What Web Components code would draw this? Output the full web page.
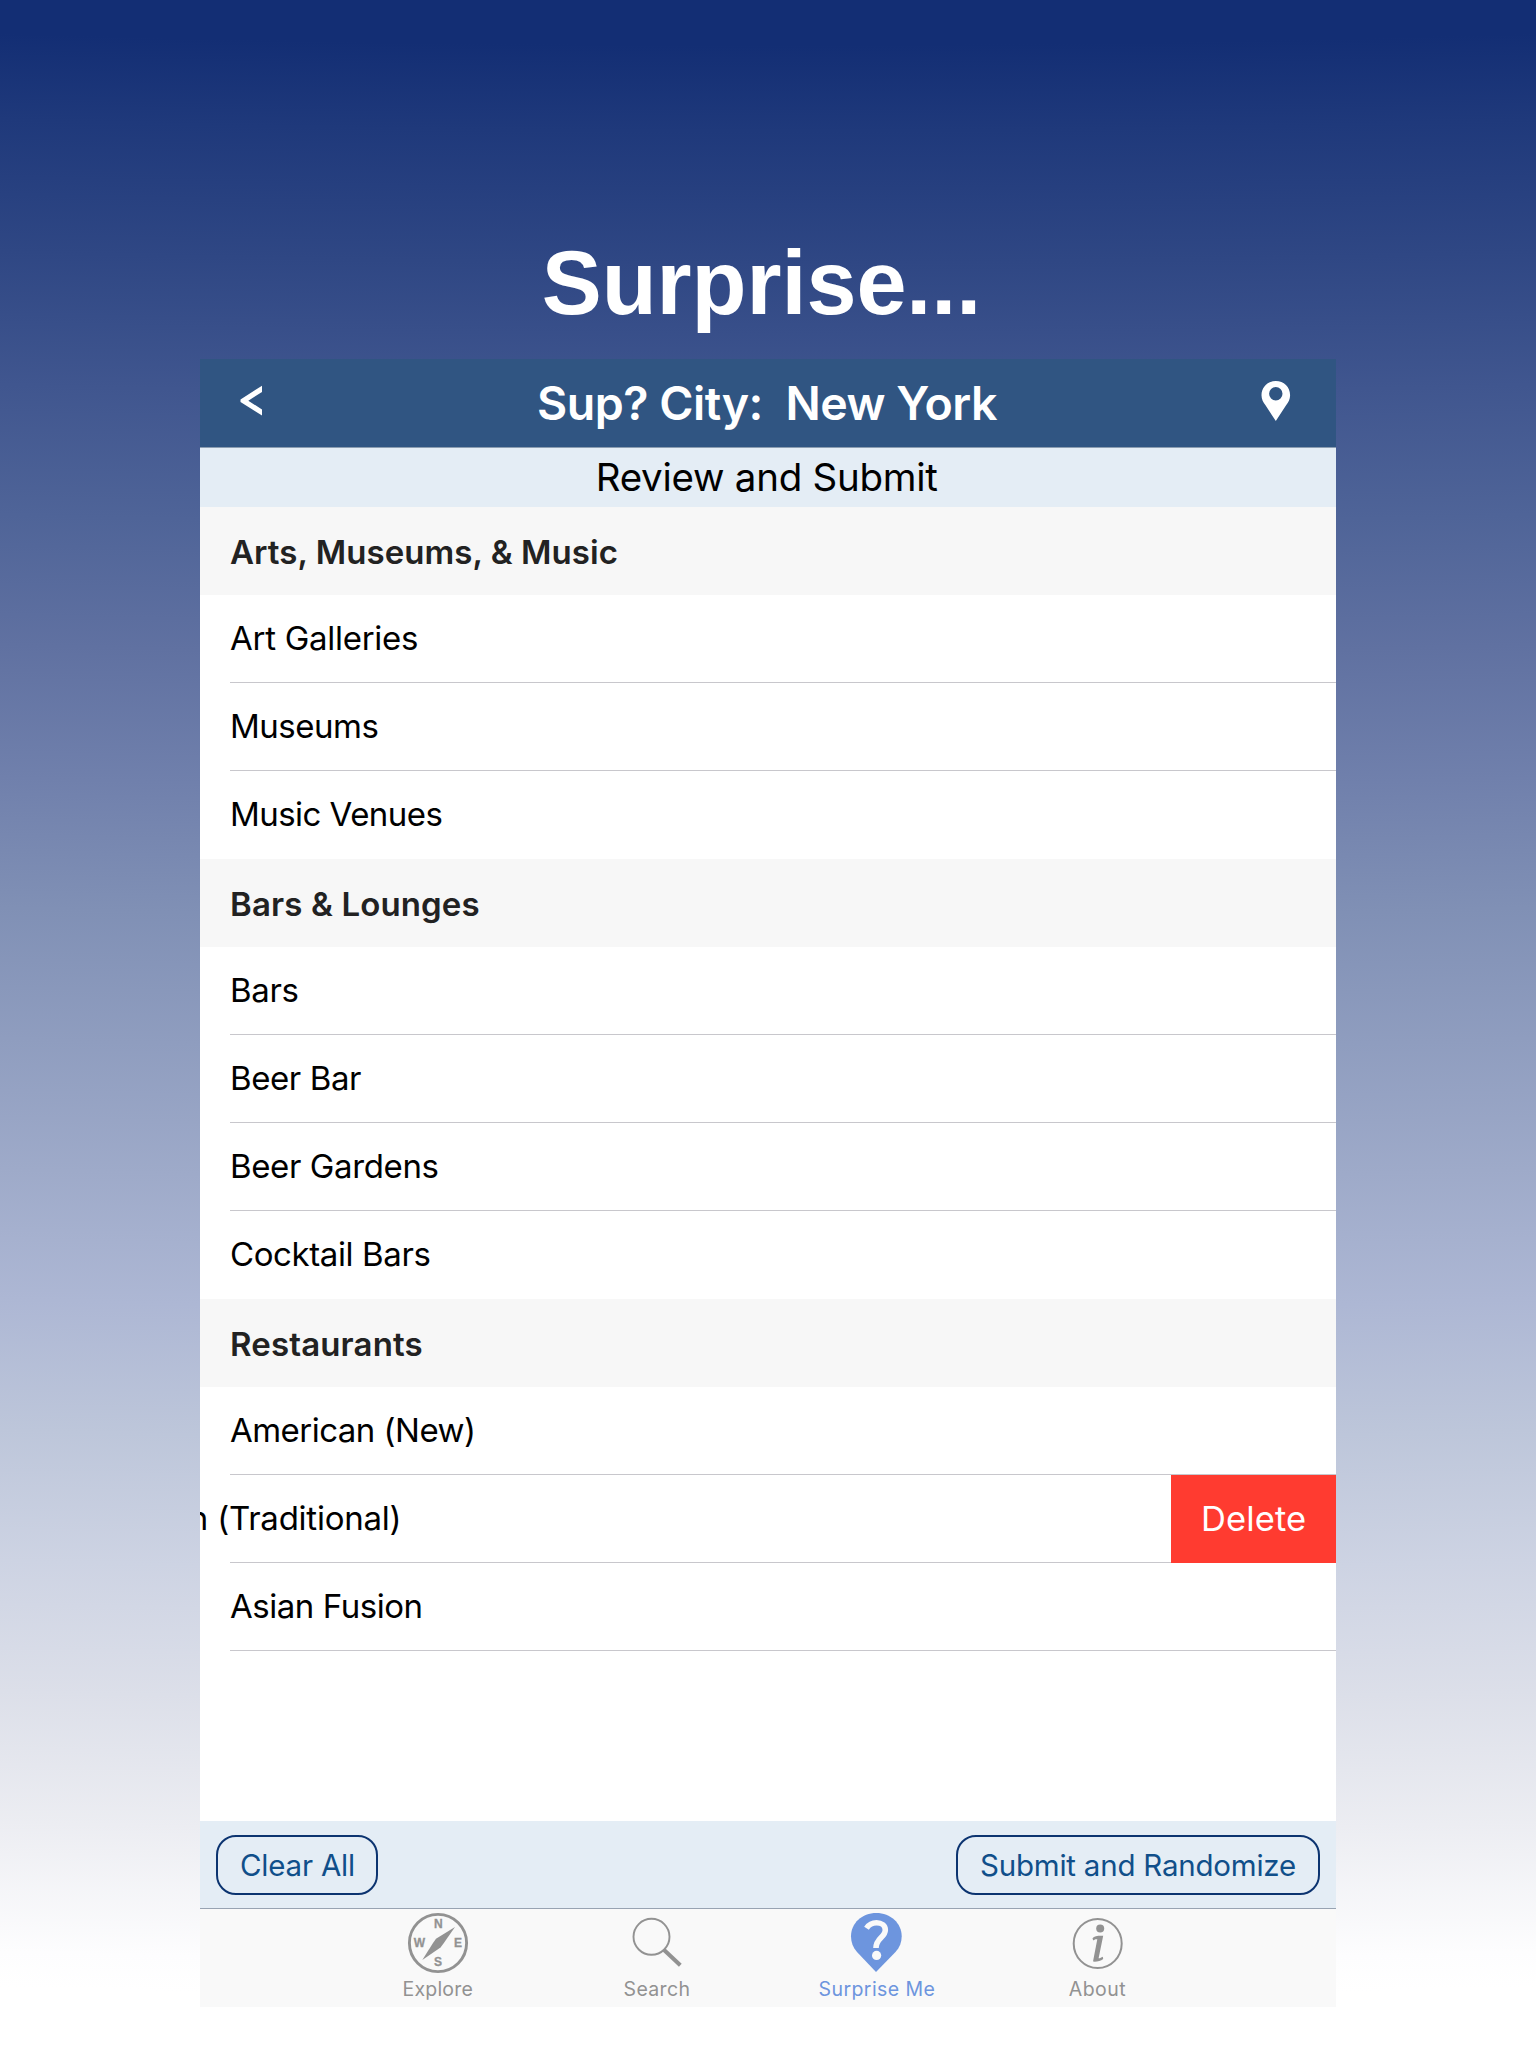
<!DOCTYPE html>
<html lang="en">
<head>
<meta charset="utf-8">
<title>Sup? City</title>
<style>
html,body{margin:0;padding:0}
body{width:1536px;height:2048px;overflow:hidden;background:#fff;font-family:Inter,"Liberation Sans",sans-serif}
</style>
</head>
<body>
<promo-page>
  <fit-text slot="title" w="431.5">Surprise...</fit-text>
  <nav-header><fit-text w="459">Sup? City:  New York</fit-text></nav-header>
  <sub-header><fit-text w="338.5">Review and Submit</fit-text></sub-header>
  <list-section>
    <fit-text slot="head" w="388" dx="-1">Arts, Museums, &amp; Music</fit-text>
    <list-row><fit-text w="187" dx="-1">Art Galleries</fit-text></list-row>
    <list-row><fit-text w="145.5" dx="1">Museums</fit-text></list-row>
    <list-row last><fit-text w="209.5" dx="1">Music Venues</fit-text></list-row>
  </list-section>
  <list-section>
    <fit-text slot="head" w="246.5" dx="1">Bars &amp; Lounges</fit-text>
    <list-row><fit-text w="65.5" dx="1">Bars</fit-text></list-row>
    <list-row><fit-text w="129" dx="1">Beer Bar</fit-text></list-row>
    <list-row><fit-text w="205.5" dx="1">Beer Gardens</fit-text></list-row>
    <list-row last><fit-text w="198.5">Cocktail Bars</fit-text></list-row>
  </list-section>
  <list-section>
    <fit-text slot="head" w="189.5" dx="1">Restaurants</fit-text>
    <list-row><fit-text w="243" dx="-1">American (New)</fit-text></list-row>
    <list-row swiped><fit-text w="337.5" dx="-5">American (Traditional)</fit-text></list-row>
    <list-row><fit-text w="190.5" dx="-1">Asian Fusion</fit-text></list-row>
  </list-section>
  <action-bar slot="foot">
    <pill-button><fit-text w="112">Clear All</fit-text></pill-button>
    <pill-button><fit-text w="314">Submit and Randomize</fit-text></pill-button>
  </action-bar>
  <tab-bar slot="foot">
    <tab-item icon="compass"><fit-text w="69">Explore</fit-text></tab-item>
    <tab-item icon="search"><fit-text w="65" dx="-1">Search</fit-text></tab-item>
    <tab-item icon="surprise" active><fit-text w="115" dx="-1">Surprise Me</fit-text></tab-item>
    <tab-item icon="info"><fit-text w="56.5" dx="-1">About</fit-text></tab-item>
  </tab-bar>
</promo-page>
<script>
function define(name, render) {
  customElements.define(name, class extends HTMLElement {
    constructor() {
      super();
      this.attachShadow({ mode: 'open' });
    }
    connectedCallback() {
      this.shadowRoot.innerHTML = typeof render === 'function' ? render(this) : render;
    }
  });
}

define('promo-page', `<style>
:host{display:flex;flex-direction:column;align-items:center;width:1536px;height:2048px;
background:radial-gradient(circle 28000px at 768px -25000px,#132e74 25045px,#1f397b 25131px,#2f4784 25263px,#40568f 25396px,#4f6498 25526px,#6071a1 25656px,#7080ac 25789px,#8090b5 25919px,#8f9dbf 26050px,#9eaac9 26180px,#adb7d4 26310px,#bdc6da 26441px,#cdd3e3 26571px,#dcdfe9 26702px,#ecedf2 26833px,#fdfdfe 26962px,#fff 26998px)}
.title{box-sizing:border-box;height:359px;padding-top:231px;padding-right:17px;font:bold 90px/104px "Liberation Sans",Arial,sans-serif;color:#fff}
.panel{width:1136px;height:1648px;display:flex;flex-direction:column;background:#fff;overflow:hidden}
.body{flex:1}
</style><div class="title"><slot name="title"></slot></div>
<div class="panel"><div class="body"><slot></slot></div><slot name="foot"></slot></div>`);

define('nav-header', `<style>
:host{box-sizing:border-box;display:flex;align-items:center;justify-content:space-between;height:89px;border-bottom:1px solid #8b9db1;background:#305582;color:#fff;font-size:46.5px;font-weight:600;line-height:88px;padding:0 45px 0 40px}
svg{display:block;fill:currentColor}
.back{width:36px;height:44px}
</style>
<svg class="back" viewBox="240 381 36 44"><path d="M262 385.8V392L248.3 400.700 262 409.500V415.500L240.500 402V399.400Z"/></svg>
<slot></slot>
<svg width="30" height="44" viewBox="1260.500 381 30 44"><path fill-rule="evenodd" d="M1275.300 381C1267.300 381 1261 387 1261 395.200C1261 399.200 1262.700 402.300 1265 405.300L1275.300 421L1285.600 405.300C1287.900 402.300 1289.600 399.200 1289.600 395.200C1289.600 387 1283.300 381 1275.300 381ZM1275.300 387A6.700 6.700 0 1 1 1275.300 400.400A6.700 6.700 0 1 1 1275.300 387Z"/></svg>`);

define('sub-header', `<style>
:host{display:flex;justify-content:center;height:59px;background:#e4edf5;color:#000;font-size:38.5px;line-height:58px}
</style><slot></slot>`);

define('list-section', `<style>
:host{display:block}
.head{box-sizing:border-box;height:88px;padding:1px 0 0 31px;background:#f7f7f7;color:#222;font-size:33px;font-weight:600;line-height:88px}
</style><div class="head"><slot name="head"></slot></div><slot></slot>`);

define('list-row', el => `<style>
:host{display:flex;height:88px;overflow:hidden;background:#fff;color:#000;font-size:33px}
.cell{flex:1;box-sizing:border-box;height:88px;margin-left:30px;padding-left:1px;line-height:86px;border-bottom:1px solid #c8c7cc}
:host([last]) .cell{border-bottom:0}
:host([swiped]) .text{margin-left:-165px}
.delete{width:165px;background:#ff3b30;color:#fff;font-size:34.5px;line-height:87px;text-align:center}
</style><div class="cell"><div class="text"><slot></slot></div></div>${
  el.hasAttribute('swiped') ? '<div class="delete"><fit-text w="101" dx="1">Delete</fit-text></div>' : ''}`);

define('action-bar', `<style>
:host{box-sizing:border-box;display:flex;justify-content:space-between;height:88px;padding:14px 16px 0;background:#e4edf5;border-bottom:1px solid #98a3b2}
</style><slot></slot>`);

define('pill-button', `<style>
:host{box-sizing:border-box;height:60px;padding:0 23px;border:2px solid #0c3470;border-radius:20px;color:#104f8a;font-size:29.5px;line-height:56px}
</style><slot></slot>`);

define('tab-bar', `<style>
:host{display:flex;justify-content:center;height:98px;background:#f9f9f9}
</style><slot></slot>`);

const icons = {
  compass: `<svg viewBox="-2 11 100 64"><circle cx="48" cy="43" r="28.600" fill="none" stroke="currentColor" stroke-width="2.900"/>
<path d="M65 27L53.500 43.500 50.500 47.500 32.300 60 43 43 46 38.700Z"/>
<g font-family="Liberation Sans" font-weight="700" font-size="12" stroke="currentColor" stroke-width=".3" text-anchor="middle"><text x="48.300" y="27.600">N</text><text x="29.500" y="47.400">W</text><text x="68" y="47.400">E</text><text x="48" y="66.400">S</text></g></svg>`,
  search: `<svg viewBox="608.700 1911 100 64"><g fill="none" stroke="currentColor"><circle cx="652.200" cy="1936.800" r="18" stroke-width="1.900"/><path d="M664.800 1950L681 1965.300" stroke-width="4"/></g></svg>`,
  surprise: `<svg viewBox="8 11 100 64"><path d="M56 72L37 52C33 47.500 31 42 31 36.500C31 23 42 13 56.300 13C70.500 13 81.700 23 81.700 36.500C81.700 42 79.700 47.500 75.500 52Z"/>
<path d="M46.500 28.200C49 24.500 52.500 22.800 56.500 22.800C61.500 22.800 65.300 25.500 65.300 30C65.300 37.500 56 38 56 48" fill="none" stroke="#f9f9f9" stroke-width="5.600"/><circle cx="56.600" cy="55.400" r="4.600" fill="#f9f9f9"/></svg>`,
  info: `<svg viewBox="-2 11 100 64"><ellipse cx="47.700" cy="43.500" rx="24" ry="24.600" fill="none" stroke="currentColor" stroke-width="2"/><circle cx="50.200" cy="28.500" r="4"/><path d="M42.500 38.300C44.500 36 48 35.600 53.200 35.800L48.600 58.300C50 58.500 51 57.700 52.800 56.800L53.200 59C50.500 61.300 47 61.800 43 61.600L47.300 39.300C45.500 38.800 44.500 39.500 43.200 40.500Z"/></svg>`
};

define('tab-item', el => `<style>
:host{display:flex;flex-direction:column;align-items:center;width:220px;padding-top:2px;box-sizing:border-box;color:#929292;font-size:19.500px;line-height:28px}
:host([active]){color:#6d95de}
svg{display:block;width:100px;height:64px;fill:currentColor}
</style>${icons[el.getAttribute('icon')]}<slot></slot>`);

/* Tracks its text so that the inked width is exactly w pixels; dx nudges the ink sideways. */
const ctx = document.createElement('canvas').getContext('2d');
customElements.define('fit-text', class extends HTMLElement {
  connectedCallback() {
    const root = this.shadowRoot || this.attachShadow({ mode: 'open' });
    root.innerHTML = `<style>
:host{display:inline-block;white-space:pre;text-align:left}
span{display:inline-block}
</style><span><slot></slot></span>`;
    const cs = getComputedStyle(this);
    const text = this.textContent;
    const w = parseFloat(this.getAttribute('w'));
    const dx = parseFloat(this.getAttribute('dx') || 0);
    ctx.font = `${cs.fontWeight} ${cs.fontSize} ${cs.fontFamily}`;
    const m = ctx.measureText(text);
    const ink = m.actualBoundingBoxLeft + m.actualBoundingBoxRight;
    const span = root.querySelector('span');
    this.style.width = w + 'px';
    span.style.letterSpacing = (w - ink) / (text.length - 1) + 'px';
    span.style.marginLeft = m.actualBoundingBoxLeft + dx + 'px';
  }
});
</script>
</body>
</html>
